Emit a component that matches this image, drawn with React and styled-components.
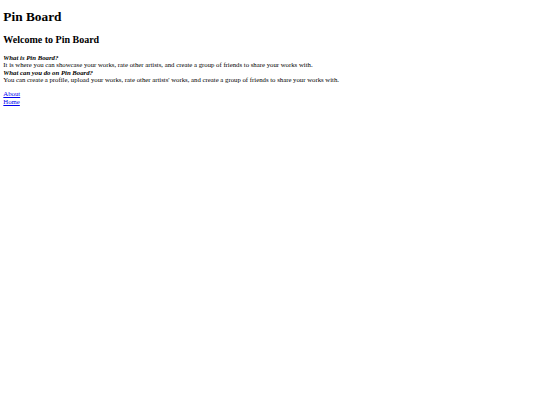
import styled, { createGlobalStyle } from "styled-components";

const GlobalStyle = createGlobalStyle`
  body {
    margin: 3.33px;
    font-family: "Liberation Serif", "Times New Roman", serif;
    font-size: 6.75px;
    color: #000;
    background: #fff;
  }
`;

const Page = styled.main`
  display: block;
`;

const Title = styled.h1`
  font-size: 13.33px;
  font-weight: 700;
  margin: 6px 0 8.93px;
`;

const Heading = styled.h2`
  font-size: 10px;
  font-weight: 700;
  margin: 8.3px 0;
`;

const Info = styled.p`
  margin: 6.5px 0;
  line-height: 7.6px;
`;

const Question = styled.strong`
  font-weight: 700;
  font-style: italic;
`;

const Nav = styled.nav`
  display: flex;
  flex-direction: column;
  align-items: flex-start;
  margin: 6px 0 6.67px;
  line-height: 7.6px;
`;

const NavLink = styled.a`
  color: #0000ee;
  text-decoration: underline;
`;

const faq = [
  {
    q: "What is Pin Board?",
    a: "It is where you can showcase your works, rate other artists, and create a group of friends to share your works with.",
  },
  {
    q: "What can you do on Pin Board?",
    a: "You can create a profile, upload your works, rate other artists' works, and create a group of friends to share your works with.",
  },
];

export default function App() {
  return (
    <>
      <GlobalStyle />
      <Page>
        <Title>Pin Board</Title>
        <Heading>Welcome to Pin Board</Heading>
        <Info>
          {faq.map((item, i) => (
            <span key={item.q}>
              <Question>{item.q}</Question>
              <br />
              {item.a}
              {i < faq.length - 1 && <br />}
            </span>
          ))}
        </Info>
        <Nav>
          <NavLink href="#about">About</NavLink>
          <NavLink href="#home">Home</NavLink>
        </Nav>
      </Page>
    </>
  );
}
